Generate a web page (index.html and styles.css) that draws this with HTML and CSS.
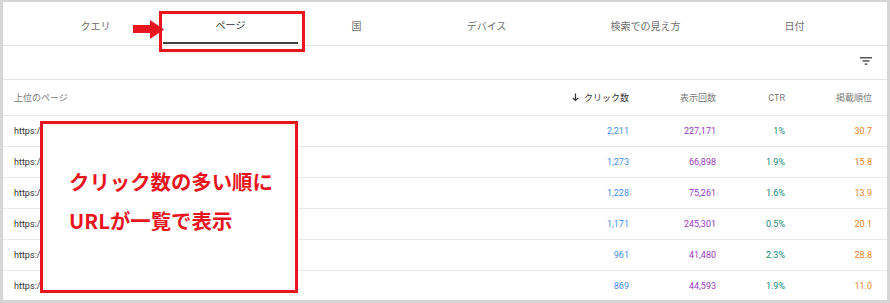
FILE: index.html
```html
<!DOCTYPE html>
<html lang="ja">
<head>
    <meta charset="UTF-8">
    <title>ページ</title>
    <link rel="stylesheet" href="styles.css">
</head>
<body>
    <div class="panel">
        <div class="tabs">
            <div class="tab t-query">クエリ</div>
            <div class="tab t-page active">ページ</div>
            <div class="tab t-country">国</div>
            <div class="tab t-device">デバイス</div>
            <div class="tab t-appear">検索での見え方</div>
            <div class="tab t-date">日付</div>
        </div>

        <div class="toolbar">
            <svg class="filter-icon" width="12" height="8" viewBox="0 0 12 8">
                <rect x="0" y="0" width="12" height="1.5" fill="#555"/>
                <rect x="2.5" y="3.2" width="7" height="1.5" fill="#555"/>
                <rect x="4.7" y="6.4" width="2.6" height="1.5" fill="#555"/>
            </svg>
        </div>

        <div class="row head">
            <div class="cell url">上位のページ</div>
            <div class="cell sorted">
                <svg width="7" height="9" viewBox="0 0 7 9"><path d="M3.5 0.5v7M0.8 4.8l2.7 2.7 2.7-2.7" stroke="#333" stroke-width="1.2" fill="none"/></svg>
                クリック数
            </div>
            <div class="cell">表示回数</div>
            <div class="cell">CTR</div>
            <div class="cell">掲載順位</div>
        </div>

        <div class="row">
            <div class="cell url">https:/</div>
            <div class="cell clicks">2,211</div>
            <div class="cell imps">227,171</div>
            <div class="cell ctr">1%</div>
            <div class="cell pos">30.7</div>
        </div>
        <div class="row">
            <div class="cell url">https:/</div>
            <div class="cell clicks">1,273</div>
            <div class="cell imps">66,898</div>
            <div class="cell ctr">1.9%</div>
            <div class="cell pos">15.8</div>
        </div>
        <div class="row">
            <div class="cell url">https:/</div>
            <div class="cell clicks">1,228</div>
            <div class="cell imps">75,261</div>
            <div class="cell ctr">1.6%</div>
            <div class="cell pos">13.9</div>
        </div>
        <div class="row">
            <div class="cell url">https:/</div>
            <div class="cell clicks">1,171</div>
            <div class="cell imps">245,301</div>
            <div class="cell ctr">0.5%</div>
            <div class="cell pos">20.1</div>
        </div>
        <div class="row">
            <div class="cell url">https:/</div>
            <div class="cell clicks">961</div>
            <div class="cell imps">41,480</div>
            <div class="cell ctr">2.3%</div>
            <div class="cell pos">28.8</div>
        </div>
        <div class="row last">
            <div class="cell url">https:/</div>
            <div class="cell clicks">869</div>
            <div class="cell imps">44,593</div>
            <div class="cell ctr">1.9%</div>
            <div class="cell pos">11.0</div>
        </div>

        <!-- annotations -->
        <div class="mark-box"></div>
        <svg class="mark-arrow" width="31" height="19" viewBox="0 0 31 19">
            <rect x="0" y="5" width="19" height="8" fill="#e8141e"/>
            <polygon points="17,0 31,9.5 17,19" fill="#e8141e"/>
        </svg>
        <div class="callout">
            <p>クリック数の多い順に</p>
            <p>URLが一覧で表示</p>
        </div>
    </div>
</body>
</html>
```

FILE: styles.css
```css
body {
    margin: 0;
    padding: 0;
    background-color: #fff;
    font-family: Roboto, "Noto Sans CJK JP", sans-serif;
}

.panel {
    position: relative;
    width: 884px;
    height: 298px;
    border-style: solid;
    border-color: #d6d6d6;
    border-width: 2px 3px 3px 3px;
    background-color: #fff;
    overflow: hidden;
}

/* tabs */
.tabs {
    display: flex;
    height: 43px;
    padding-left: 25px;
    border-bottom: 1px solid #e6e6e6;
}

.tab {
    display: flex;
    align-items: center;
    justify-content: center;
    box-sizing: border-box;
    height: 43px;
    padding-top: 3px;
    font-size: 10px;
    color: #6f6f6f;
}

.t-query { width: 135px; }
.t-page { width: 135px; }
.t-country { width: 117px; }
.t-device { width: 143px; }
.t-appear { width: 175px; }
.t-date { width: 123px; }

.tab.active {
    color: #333;
    border-bottom: 2px solid #444;
    margin-bottom: 1px;
    height: 42px;
    padding-top: 4px;
}

.toolbar {
    display: flex;
    justify-content: flex-end;
    align-items: center;
    height: 33px;
    padding-right: 15px;
    border-bottom: 1px solid #e6e6e6;
}

.filter-icon {
    margin-top: -3px;
}

/* table */
.row {
    display: grid;
    grid-template-columns: 1fr 100px 87px 69px 87px;
    align-items: center;
    height: 30px;
    padding: 0 15px 0 11px;
    border-bottom: 1px solid #e9e9e9;
    font-size: 9px;
}

.row.head {
    height: 35px;
    color: #7a7a7a;
    font-size: 9px;
}

.row.last {
    border-bottom: none;
    height: 29px;
}

.cell {
    text-align: right;
    white-space: nowrap;
}

.cell.url {
    text-align: left;
    color: #333;
}

.head .cell.url {
    color: #7a7a7a;
}

.head .sorted {
    color: #333;
}

.head .sorted svg {
    margin-right: 3px;
    vertical-align: -1px;
}

.clicks { color: #4a8de6; }
.imps { color: #9b3ac0; }
.ctr { color: #138a78; }
.pos { color: #e8821e; }

/* red annotations */
.mark-box {
    position: absolute;
    left: 156px;
    top: 9px;
    width: 140px;
    height: 35px;
    border: 3px solid #e8141e;
}

.mark-arrow {
    position: absolute;
    left: 130px;
    top: 18px;
}

.callout {
    position: absolute;
    left: 37px;
    top: 119px;
    width: 258px;
    height: 172px;
    box-sizing: border-box;
    border: 3px solid #e8141e;
    background-color: #fff;
    padding: 38px 0 0 26px;
}

.callout p {
    margin: 0;
    height: 39px;
    line-height: 39px;
    font-family: "Noto Sans CJK JP", sans-serif;
    font-weight: bold;
    font-size: 20.4px;
    color: #e8141e;
    white-space: nowrap;
}
```
